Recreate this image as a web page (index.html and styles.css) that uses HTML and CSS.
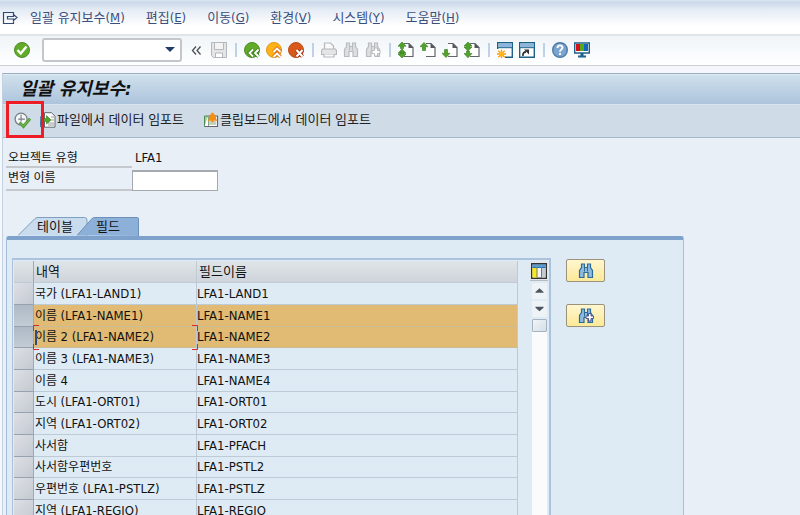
FILE: index.html
```html
<!DOCTYPE html>
<html lang="ko">
    <head>
        <meta charset="UTF-8">
        <meta name="viewport" content="width=device-width, initial-scale=1.0">
        <title>일괄 유지보수</title>
        <link rel="stylesheet" href="styles.css">
    </head>
    <body>
        <!-- shared icon shapes -->
        <svg class="defs" aria-hidden="true">
            <symbol id="binoculars" viewBox="0 0 16 16">
                <path d="M3.500 1h3v3.500h3V1h3v3.500l2 3V14.500h-4.500V9.500h-4v5H1.500V7.500l2-3z" stroke-width="1.200"/>
                <path d="M6.500 4.500v4M9.500 4.500v4" stroke-width="1"/>
            </symbol>
            <symbol id="page" viewBox="0 0 16 16">
                <path d="M6 1.500h5l4 4v9H6" fill="#fff" stroke="#62666b" stroke-width="1.200"/>
                <path d="M10.500 1v5h5z" fill="#55595e"/>
            </symbol>
            <symbol id="window" viewBox="0 0 16 16">
                <path d="M.7.7h14.600v14.600H.7z" fill="#fff" stroke="#1d6288" stroke-width="1.400"/>
                <path d="M1.400 1.400h13.200v4H1.400z" fill="#8db6dc"/>
                <path d="M1 5.700h14" stroke="#1d6288"/>
            </symbol>
        </svg>

        <nav class="menubar">
            <svg class="icon" viewBox="0 0 16 16" fill="none" stroke="#33486f" stroke-width="1.200"><path d="M11.500 4.500v-2h-10v11h10v-2M5.500 6.500h6V4.500l3.500 3-3.500 3v-1.500h-6z"/></svg>
            <button>일괄 유지보수(<u>M</u>)</button>
            <button>편집(<u>E</u>)</button>
            <button>이동(<u>G</u>)</button>
            <button>환경(<u>V</u>)</button>
            <button>시스템(<u>Y</u>)</button>
            <button>도움말(<u>H</u>)</button>
        </nav>

        <div class="toolbar">
            <button class="enter" aria-label="확인"><svg class="icon" viewBox="0 0 16 16"><circle cx="8" cy="8" r="7.500" fill="#62ab28" stroke="#4c8c2b"/><path d="M3.500 8l3.200 3.500L12.500 4.500" fill="none" stroke="#fff" stroke-width="2.400"/></svg></button>
            <div class="command"><select aria-label="명령"><option></option></select></div>
            <button aria-label="접기"><svg class="icon small" viewBox="0 0 14 16" fill="none" stroke="#4a4f55" stroke-width="1.300"><path d="M5 4.500L1.500 8.500 5 12.500M9.500 4.500L6 8.500l3.500 4"/></svg></button>
            <button aria-label="저장"><svg class="icon" viewBox="0 0 16 16" fill="#e4e5e6" stroke="#b5b8ba"><path d="M.5.5h15v15h-13l-2-2z"/><path d="M3.500.5h9v7h-9z" fill="#f4f4f4"/><path d="M4.500 15v-4h7v4" fill="#fff"/></svg></button>
            <span class="sep"></span>
            <button aria-label="뒤로"><svg class="icon" viewBox="0 0 16 16" fill="none"><circle cx="8" cy="8" r="7.500" fill="#62ab28" stroke="#4c8c2b"/><path d="M9 7.500L5.500 11 9 14.500M14.500 7.500L11 11l3.500 3.500" stroke="#3e7d20" stroke-width="3.500"/><path d="M9 7.500L5.500 11 9 14.500M14.500 7.500L11 11l3.500 3.500" stroke="#fff" stroke-width="1.800"/></svg></button>
            <button aria-label="종료"><svg class="icon" viewBox="0 0 16 16" fill="none"><circle cx="8" cy="8" r="7.500" fill="#fcb316" stroke="#e69514"/><path d="M7.500 10L11 6.500l3.500 3.500M7.500 15l3.500-3.500 3.500 3.500" stroke="#df6a10" stroke-width="3.500"/><path d="M7.500 10L11 6.500l3.500 3.500M7.500 15l3.500-3.500 3.500 3.500" stroke="#fff" stroke-width="1.800"/></svg></button>
            <button aria-label="취소"><svg class="icon" viewBox="0 0 16 16" fill="none"><circle cx="8" cy="8" r="7.500" fill="#d85a18" stroke="#bd4b1b"/><path d="M8.500 8l6 6.500m0-6.500l-6 6.500" stroke="#a33413" stroke-width="4"/><path d="M8.500 8l6 6.500m0-6.500l-6 6.500" stroke="#fff" stroke-width="2"/></svg></button>
            <span class="sep"></span>
            <button aria-label="인쇄"><svg class="icon" viewBox="0 0 16 16" fill="#e4e5e6" stroke="#b5b8ba" stroke-width="1.200"><path d="M3.500 7V1h6l3 3v3" fill="#fafafa"/><path d="M1.500 7h13l1 1.500v4h-15v-4z"/><path d="M3 12.500v2.500h10v-2.500" fill="#fafafa"/></svg></button>
            <button aria-label="찾기"><svg class="icon" fill="#dcdedf" stroke="#b9bcbe"><use href="#binoculars"/></svg></button>
            <button aria-label="다음 찾기"><svg class="icon" viewBox="0 0 16 16" fill="#dcdedf" stroke="#b9bcbe"><use href="#binoculars"/><path d="M9.500 6h3v2.500H15v3h-2.500V14h-3v-2.500H7v-3h2.500z" fill="#fff"/></svg></button>
            <span class="sep"></span>
            <button aria-label="첫 페이지"><svg class="icon" viewBox="0 0 16 16"><use href="#page"/><path d="M4 0l4 4.200H5.500V6.500h-3V4.200H0zM4 7l4 4.200H0zM2.500 10h3v2H8l-4 4-4-4h2.500z" fill="#52a32b" stroke="#33791d" stroke-width=".6"/></svg></button>
            <button aria-label="이전 페이지"><svg class="icon" viewBox="0 0 16 16"><use href="#page"/><path d="M4 .5L8 4.700H5.500V8.500h-3V4.700H0z" fill="#52a32b" stroke="#33791d" stroke-width=".6"/></svg></button>
            <button aria-label="다음 페이지"><svg class="icon" viewBox="0 0 16 16"><use href="#page"/><path d="M4 15.500l4-4.200H5.500V7.500h-3v3.800H0z" fill="#52a32b" stroke="#33791d" stroke-width=".6"/></svg></button>
            <button aria-label="마지막 페이지"><svg class="icon" viewBox="0 0 16 16"><use href="#page"/><path d="M4 0l4 4H5.500v1H8L4 9 0 5h2.500V4H0zM2.500 9h3v2.500H8l-4 4.300-4-4.300h2.500z" fill="#52a32b" stroke="#33791d" stroke-width=".6"/></svg></button>
            <span class="sep"></span>
            <button aria-label="새 세션"><svg class="icon" viewBox="0 0 16 16"><use href="#window"/><path d="M0 7h8v9H0z" fill="#fff"/><path d="M4.500 7.500v9M0 12h9M1.300 8.800l6.400 6.400M7.700 8.800l-6.400 6.400" stroke="#f39a16" stroke-width="1.300"/><circle cx="4.500" cy="12" r="2.600" fill="#fdb915"/></svg></button>
            <button aria-label="바로가기"><svg class="icon" viewBox="0 0 16 16"><use href="#window"/><path d="M4 14c-.5-3 1-4 3-4" fill="none" stroke="#333" stroke-width="1.800"/><path d="M5 7.500h5v5z" fill="#333"/></svg></button>
            <span class="sep"></span>
            <button aria-label="도움말"><svg class="icon" viewBox="0 0 16 16" fill="none"><circle cx="8" cy="8" r="7.300" fill="#7ba5d0" stroke="#4d7ba6" stroke-width="1.400"/><path d="M5.500 6c0-3.500 5-3.300 5-.4C10.500 7.500 8 7.300 8 9.700M8 11v2" stroke="#fff" stroke-width="1.900"/></svg></button>
            <button aria-label="화면 설정"><svg class="icon" viewBox="0 0 16 16"><path d="M.7 1h14.600v10H.7z" fill="#fff" stroke="#1d6288" stroke-width="1.400"/><path d="M2 2h4v7H2z" fill="#d3121c"/><path d="M6 2h4v7H6z" fill="#5aa61e"/><path d="M10 2h4v7h-4z" fill="#1467b8"/><path d="M6.500 11h3v2.500H12V15.500H4v-2H6.500z" fill="#1d6288"/></svg></button>
        </div>

        <main class="app">
            <h1>일괄 유지보수:</h1>
            <div class="actions">
                <button class="execute" aria-label="실행">
                    <svg class="icon" viewBox="0 0 18 18" fill="none"><circle cx="7.500" cy="7.500" r="6.300" fill="#f5f7f8" stroke="#777d82" stroke-width="1.300"/><path d="M7.500 3v7M4.500 7.500h7" stroke="#777d82" stroke-width="1.200"/><path d="M6 11l4 4.500L17 7" stroke="#4f9a33" stroke-width="3"/><path d="M6.500 11.500l3.500 3.500L16.500 7.500" stroke="#83c26a"/></svg>
                </button>
                <button class="file">
                    <svg class="icon" viewBox="0 0 16 16"><path d="M0 5h5v10H.8z" fill="#8cb2d6" stroke="#376b99"/><path d="M4.500.7h7l3.500 3.500v11H4.500z" fill="#fff" stroke="#62666b"/><path d="M11 5h3M11 8h3M8 11h6M8 13h6" stroke="#999"/><path d="M3 6.500h3.500V3.500L11 8l-4.500 4V9.500H3z" fill="#52a32b" stroke="#33791d" stroke-width=".6"/></svg>
                    파일에서 데이터 임포트
                </button>
                <button>
                    <svg class="icon" viewBox="0 0 16 16"><path d="M1.500 4H5v10.500H1.500z" fill="#a6d29a" stroke="#4c8a55"/><path d="M5 4h9.500v10.500H1.500" fill="#fff" stroke="#62666b" stroke-width="1.200"/><path d="M5.500 4v10M6 10h7M6 12h7" stroke="#8aa585"/><path d="M9.500.3l3.500 4v2.500l1.500 2h-4v1.500h-2V8.800h-4L6 6.800V4.300z" fill="#f28d15"/></svg>
                    클립보드에서 데이터 임포트
                </button>
                <span class="highlight"></span>
            </div>

            <form class="header">
                <div class="name">오브젝트 유형</div>
                <div class="value">LFA1</div>
                <label class="name" for="variant">변형 이름</label>
                <input id="variant" type="text">
            </form>

            <div class="tabs">
                <button class="tab"><svg viewBox="0 0 70 19" fill="#c8dcee" stroke="#7d9fc2"><path d="M0 18.500L17 1.500Q18 .5 20 .5H66.500Q69 .5 69 3V19"/></svg>테이블</button>
                <button class="tab active"><svg viewBox="0 0 62 19" fill="#8db0d9" stroke="#6b91bb"><path d="M0 18.500L15 1.500Q16 .5 18 .5H60.500Q61.500.5 61.500 2V19"/></svg>필드</button>
            </div>
            <section class="panel">
                <div class="grid">
                    <table>
                        <thead>
                            <tr><th class="pick"></th><th class="desc">내역</th><th>필드이름</th></tr>
                        </thead>
                        <tbody>
                            <tr><td class="pick"></td><td>국가 <span>(LFA1-LAND1)</span></td><td><span>LFA1-LAND1</span></td></tr>
                            <tr class="selected"><td class="pick"></td><td>이름 <span>(LFA1-NAME1)</span></td><td><span>LFA1-NAME1</span></td></tr>
                            <tr class="selected"><td class="pick"></td><td class="focus">이름 <span>2 (LFA1-NAME2)</span><svg viewBox="0 0 165 25" fill="none" stroke="#e0242c"><path d="M.5 6V.5H6M159 .5h5.500V6M.5 19v5.500H6M159 24.500h5.500V19"/></svg></td><td><span>LFA1-NAME2</span></td></tr>
                            <tr><td class="pick"></td><td>이름 <span>3 (LFA1-NAME3)</span></td><td><span>LFA1-NAME3</span></td></tr>
                            <tr><td class="pick"></td><td>이름 <span>4</span></td><td><span>LFA1-NAME4</span></td></tr>
                            <tr><td class="pick"></td><td>도시 <span>(LFA1-ORT01)</span></td><td><span>LFA1-ORT01</span></td></tr>
                            <tr><td class="pick"></td><td>지역 <span>(LFA1-ORT02)</span></td><td><span>LFA1-ORT02</span></td></tr>
                            <tr><td class="pick"></td><td>사서함</td><td><span>LFA1-PFACH</span></td></tr>
                            <tr><td class="pick"></td><td>사서함우편번호</td><td><span>LFA1-PSTL2</span></td></tr>
                            <tr><td class="pick"></td><td>우편번호 <span>(LFA1-PSTLZ)</span></td><td><span>LFA1-PSTLZ</span></td></tr>
                            <tr><td class="pick"></td><td>지역 <span>(LFA1-REGIO)</span></td><td><span>LFA1-REGIO</span></td></tr>
                        </tbody>
                    </table>
                    <div class="scroll">
                        <button class="config" aria-label="테이블 설정"><svg class="icon" viewBox="0 0 16 16"><path d="M.7.7h14.600v14.600H.7z" fill="#f4f6f8" stroke="#333" stroke-width="1.400"/><path d="M1.500 1.500h13V5h-13z" fill="#2474b5"/><path d="M1.500 5h4.500v9.500H1.500z" fill="#fbe80c"/><path d="M11 5h3.500v9.500H11z" fill="#c5cbd1"/><path d="M6 2v12.500M10.500 2v12.500" stroke="#777"/><path d="M1.500 3h13" stroke="#8cc0e4"/></svg></button>
                        <button class="arrow" aria-label="위로"><svg viewBox="0 0 10 6"><path d="M5 0l4.500 4v1h-9V4z"/></svg></button>
                        <button class="arrow" aria-label="아래로"><svg viewBox="0 0 10 6"><path d="M5 5.500L.5 1.500v-1h9v1z"/></svg></button>
                        <div class="track"><div class="thumb"></div></div>
                    </div>
                </div>
                <div class="side">
                    <button aria-label="찾기"><svg class="icon" fill="#8fb9df" stroke="#286c99"><use href="#binoculars"/></svg></button>
                    <button aria-label="다음 찾기"><svg class="icon" viewBox="0 0 16 16" fill="#8fb9df" stroke="#286c99"><use href="#binoculars"/><path d="M10.500 5.500h2.500v2.500h2.500v2.500H13V13h-2.500v-2.500H8V8h2.500z" fill="#fff" stroke="#4a5597"/></svg></button>
                </div>
            </section>
        </main>
    </body>
</html>
```
FILE: styles.css
```css
* {
    box-sizing: border-box;
}
html, body {
    height: 100%;
}
body {
    display: flex;
    flex-direction: column;
    margin: 0;
    overflow: hidden;
    background: #f4f7fb;
    color: #111;
    font-family: "DejaVu Sans Condensed", "Noto Sans CJK KR", sans-serif;
    font-size: 13px;
    line-height: 20px;
}
button {
    margin: 0;
    padding: 0;
    border: none;
    background: none;
    color: inherit;
    font: inherit;
    white-space: nowrap;
    cursor: pointer;
}
.defs {
    position: absolute;
    width: 0;
    height: 0;
}
.icon {
    display: block;
    flex: none;
    width: 16px;
    height: 16px;
}
.icon.small {
    width: 14px;
}

/* menu and system toolbar */
.menubar {
    display: flex;
    flex: none;
    align-items: center;
    gap: 21px;
    height: 36px;
    padding: 2px 0 0 2px;
    border-bottom: 2px solid #e1e5ea;
    background: linear-gradient(#dbe9f2 0, #cbd8e9 2px, #e5ecf5 10px, #fff 26px);
    color: #3b4f7d;
}
.menubar .icon {
    margin-right: -9px;
}
.toolbar {
    display: flex;
    flex: none;
    align-items: center;
    gap: 6px;
    height: 30px;
    padding: 0 0 2px 14px;
    border-bottom: 1px solid #cbcfd5;
    background: linear-gradient(#f0f5f8, #fff);
}
.command {
    position: relative;
    margin: 0 3px 0 6px;
}
.command select {
    display: block;
    appearance: none;
    width: 140px;
    height: 24px;
    border: 2px solid #c3c6ca;
    border-radius: 3px;
    background: #fff;
}
.command::after {
    content: "";
    position: absolute;
    top: 9px;
    right: 7px;
    border: 5px solid transparent;
    border-top-color: #213c6c;
    border-bottom: none;
}
.sep {
    width: 2px;
    height: 14px;
    margin: 0 1px 0 2px;
    background: #bed1e6;
}

/* application area */
.app {
    display: flex;
    flex: 1;
    flex-direction: column;
    min-height: 0;
    margin: 7px 0 0 2px;
    border-top: 1px solid #98adc3;
    border-left: 1px solid #c4d1e1;
    background: #e8eff6;
}
h1 {
    flex: none;
    height: 31px;
    margin: 0;
    padding-left: 17px;
    border-top: 1px solid #dfebf5;
    border-bottom: 1px solid #d8e5f0;
    background: linear-gradient(#d0e0ec, #acc4dc);
    font-size: 18px;
    font-style: italic;
    font-weight: bold;
    line-height: 28px;
}
.actions {
    position: relative;
    display: flex;
    flex: none;
    height: 33px;
    padding: 0 0 2px 11px;
    border-bottom: 1px solid #a7b8ca;
    background: #cfdce8;
    color: #222;
}
.actions button {
    display: flex;
    align-items: center;
    gap: 1px;
    margin-right: 19px;
}
.actions .execute {
    margin-right: 9px;
}
.execute .icon {
    width: 17px;
    height: 17px;
}
.highlight {
    position: absolute;
    top: -4px;
    left: 3px;
    width: 38px;
    height: 37px;
    border: 3px solid #ee1c25;
    pointer-events: none;
}
.header {
    display: grid;
    flex: none;
    grid-template-columns: 126px 86px;
    grid-template-rows: 20px 23px;
    padding: 10px 0 0 3px;
}
.name {
    padding-left: 2px;
    border-bottom: 2px solid #c5c9cd;
    font-size: 12px;
}
.value {
    padding-left: 3px;
}
.header input {
    align-self: end;
    width: 100%;
    height: 21px;
    border: 1px solid #a5aaae;
    border-top-width: 2px;
    background: #fff;
}

/* tabs */
.tabs {
    display: flex;
    flex: none;
    margin-top: 26px;
    padding-left: 15px;
}
.tab {
    position: relative;
    width: 70px;
    height: 19px;
    padding-left: 19px;
    line-height: 18px;
    text-align: left;
    isolation: isolate;
}
.tab.active {
    width: 62px;
    margin-left: -11px;
}
.tab svg {
    position: absolute;
    inset: 0;
    z-index: -1;
}
.panel {
    display: flex;
    flex: 1;
    align-items: flex-start;
    gap: 15px;
    min-height: 0;
    max-width: 678px;
    margin-left: 3px;
    padding: 18px 0 0 5px;
    border: 1px solid #a4bedb;
    border-top: 4px solid #7fa2cc;
    border-bottom: none;
    border-radius: 3px 3px 0 0;
    background: #dfebf4;
}

/* field table */
.grid {
    display: flex;
    flex: 0 1 539px;
    justify-content: space-between;
    padding: 1px 1px 0 1px;
    border: 2px solid #abc3dd;
    border-left-width: 1px;
    border-bottom: none;
}
table {
    flex: 0 1 504px;
    border-collapse: separate;
    border-spacing: 0;
    table-layout: fixed;
    font-size: 12px;
}
th, td {
    height: 22px;
    padding: 0 0 0 1px;
    border-right: 1px solid #bccad6;
    border-bottom: 1px solid #bdcbd6;
    line-height: 18px;
    text-align: left;
    white-space: nowrap;
}
th {
    padding-left: 2px;
    background: linear-gradient(#e0e5e9, #cfd4da);
    font-size: 13px;
    font-weight: normal;
}
td span {
    font-size: 13px;
}
td:last-child {
    padding-left: 0;
}
tr:nth-child(3n) td {
    height: 21px;
}
.pick {
    width: 20px;
    border-right-color: #9fa8b3;
}
.desc {
    width: 163px;
}
td.pick {
    border-bottom-color: #98a2ae;
    background: linear-gradient(135deg, #dde0e5, #c4c9d1);
}
.selected td {
    border-bottom-color: #c9bd98;
    background: #e1bb73;
}
.selected td.pick {
    border-bottom-color: #98a2ae;
    background: linear-gradient(#aeb9c5, #c2ccd5);
}
.selected .focus {
    position: relative;
}
/* text cursor */
.focus::before {
    content: "";
    position: absolute;
    top: 3px;
    left: 1px;
    width: 2px;
    height: 15px;
    background: #2b4c86;
}
/* corner brackets round the focused cell */
.focus svg {
    position: absolute;
    top: -2px;
    left: -1px;
    z-index: 1;
    width: 165px;
    height: 25px;
}
.scroll {
    display: flex;
    flex-direction: column;
    align-items: center;
    width: 18px;
}
.config {
    display: grid;
    place-items: center;
    width: 18px;
    height: 20px;
    margin-bottom: 2px;
    border-bottom: 1px solid #b8bcc0;
    background: #e3e7eb;
}
.arrow {
    display: grid;
    place-items: center;
    width: 15px;
    height: 16px;
    margin-bottom: 2px;
    background: #eef3f8;
}
.arrow svg {
    width: 9px;
    height: 6px;
    fill: #4c5661;
}
.track {
    flex: 1;
    width: 15px;
    background: #fafbfd;
}
.thumb {
    width: 15px;
    height: 13px;
    border: 1px solid #a5b3c1;
    border-radius: 1px;
    background: linear-gradient(135deg, #f1f5f8, #d3dfe9);
}
.side {
    display: grid;
    gap: 22px;
    padding-top: 1px;
}
.side button {
    display: grid;
    place-items: center;
    width: 39px;
    height: 23px;
    border: 1px solid #9a927a;
    border-radius: 2px;
    background: linear-gradient(#fff6cf, #fce998);
}
```
